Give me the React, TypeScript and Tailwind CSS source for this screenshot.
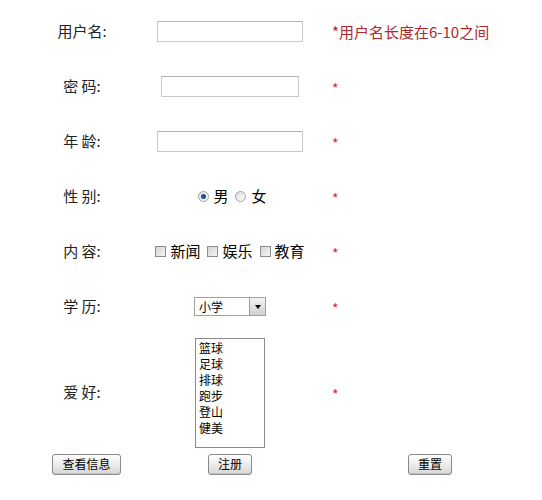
import React from 'react';

const font = "font-['SimSun','Noto_Sans_CJK_SC',sans-serif]";

const Radio = ({ checked }: { checked?: boolean }) => (
  <span className="inline-flex w-[11px] h-[11px] rounded-full border border-[#a4a4a4] bg-gradient-to-br from-[#dcdcdc] to-[#ffffff] items-center justify-center">
    {checked && <span className="w-[5px] h-[5px] rounded-full bg-[#21508f]" />}
  </span>
);

const Check = () => (
  <span className="inline-block w-[11px] h-[11px] border border-[#8c8c8c] bg-gradient-to-br from-[#d4d4d4] to-[#f6f6f6]" />
);

const Btn = ({ children }: { children: React.ReactNode }) => (
  <button className="h-[21px] px-[9px] text-[12px] leading-none text-black border border-[#8a8a8a] rounded-[3px] bg-gradient-to-b from-[#ffffff] via-[#ececec] to-[#d6d6d6] shadow-[inset_0_-1px_0_#c4c4c4]">
    {children}
  </button>
);

const Star = () => <span className="text-[#d0283a] text-[14px] leading-none">*</span>;

const Row = ({ label, children, hint, h = 'h-[55px]' }: { label: string; children: React.ReactNode; hint?: React.ReactNode; h?: string }) => (
  <div className={`grid grid-cols-[94px_202px_198px] items-center ${h}`}>
    <div className="text-center text-[15px] text-[#222]">{label}</div>
    <div className="flex justify-center items-center">{children}</div>
    <div className="pl-[1px]">{hint ?? <Star />}</div>
  </div>
);

const Input = ({ w }: { w: string }) => (
  <input className={`${w} h-[21px] border border-[#c8c8c8] border-t-[#b4b4b4] bg-white outline-none`} />
);

export default function App() {
  const hobbies = ['篮球', '足球', '排球', '跑步', '登山', '健美'];
  return (
    <div className={`w-[542px] h-[500px] bg-white pt-[4px] pl-[35px] ${font}`}>
      <Row
        label="用户名:"
        hint={<span className="text-[15px] text-[#b3262c]">*用户名长度在6-10之间</span>}
      >
        <Input w="w-[146px]" />
      </Row>
      <Row label="密 码:">
        <Input w="w-[138px]" />
      </Row>
      <Row label="年 龄:">
        <Input w="w-[146px]" />
      </Row>
      <Row label="性 别:">
        <div className="flex items-center text-[15px] pl-[5px]">
          <Radio checked />
          <span className="ml-[4px]">男</span>
          <span className="ml-[6px]"><Radio /></span>
          <span className="ml-[6px]">女</span>
        </div>
      </Row>
      <Row label="内 容:">
        <div className="flex items-center text-[15px]">
          <Check />
          <span className="ml-[4px]">新闻</span>
          <span className="ml-[7px] flex"><Check /></span>
          <span className="ml-[4px]">娱乐</span>
          <span className="ml-[7px] flex"><Check /></span>
          <span className="ml-[4px]">教育</span>
        </div>
      </Row>
      <Row label="学 历:">
        <div className="flex w-[72px] h-[19px] border border-[#a0a0a0] bg-white">
          <span className="flex-1 text-[12px] leading-[17px] pl-[4px]">小学</span>
          <span className="w-[16px] h-[17px] border-l border-[#a0a0a0] bg-gradient-to-b from-[#f4f4f4] to-[#d0d0d0] flex items-center justify-center">
            <span className="w-0 h-0 border-l-[3px] border-r-[3px] border-t-[4px] border-l-transparent border-r-transparent border-t-black" />
          </span>
        </div>
      </Row>
      <Row label="爱 好:" h="h-[117px]">
        <div className="w-[70px] h-[110px] border border-[#8a8a8a] bg-white pt-[1px] pl-[3px]">
          {hobbies.map((x) => (
            <div key={x} className="text-[12px] leading-[16px]">{x}</div>
          ))}
        </div>
      </Row>
      <div className="grid grid-cols-[94px_202px_198px] items-center h-[26px]">
        <div className="flex justify-center pl-[9px]"><Btn>查看信息</Btn></div>
        <div className="flex justify-center"><Btn>注册</Btn></div>
        <div className="flex justify-center"><Btn>重置</Btn></div>
      </div>
    </div>
  );
}
